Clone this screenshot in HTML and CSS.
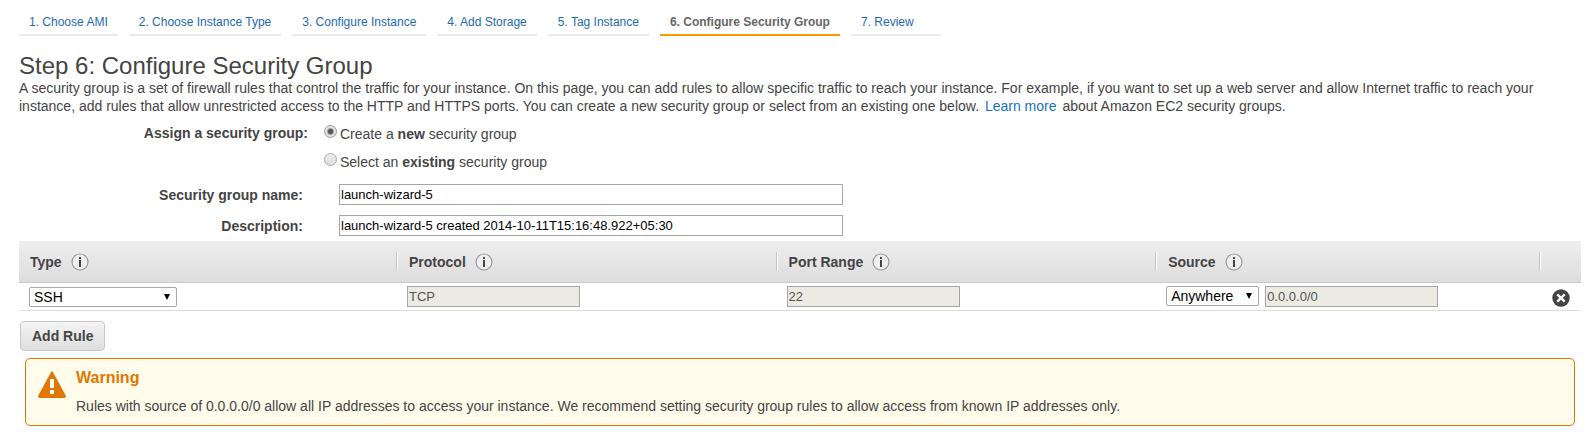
FILE: index.html
```html
<!DOCTYPE html>
<html lang="en">
<head>
<meta charset="utf-8">
<title>Step 6: Configure Security Group</title>
<link rel="stylesheet" href="styles.css">
</head>
<body>
<svg class="sprite" aria-hidden="true">
  <symbol id="info" viewBox="0 0 18 18">
    <circle cx="9" cy="9" r="8" fill="#eee" stroke="#999" stroke-width="1.2"/>
    <path d="M8 4h2v2H8zM8 7h2v7H8z" fill="#444"/>
  </symbol>
</svg>
<nav class="steps">
  <a class="step" href="#">1. Choose AMI</a>
  <a class="step" href="#">2. Choose Instance Type</a>
  <a class="step" href="#">3. Configure Instance</a>
  <a class="step" href="#">4. Add Storage</a>
  <a class="step" href="#">5. Tag Instance</a>
  <a class="step step-current" href="#" aria-current="step">6. Configure Security Group</a>
  <a class="step" href="#">7. Review</a>
</nav>
<main class="content">
  <h1 class="title">Step 6: Configure Security Group</h1>
  <p class="intro">A security group is a set of firewall rules that control the traffic for your instance. On this page, you can add rules to allow specific traffic to reach your instance. For example, if you want to set up a web server and allow Internet traffic to reach your instance, add rules that allow unrestricted access to the HTTP and HTTPS ports. You can create a new security group or select from an existing one below. <a class="learn" href="#">Learn more</a> about Amazon EC2 security groups.</p>

  <form class="form">
    <div class="assign" role="radiogroup" aria-labelledby="assign-label">
      <span class="label" id="assign-label">Assign a security group:</span>
      <div class="choices">
        <label class="choice"><input class="radio" type="radio" name="group" checked><span>Create a <b>new</b> security group</span></label>
        <label class="choice"><input class="radio" type="radio" name="group"><span>Select an <b>existing</b> security group</span></label>
      </div>
    </div>
    <div class="field">
      <label class="label" for="name">Security group name:</label>
      <input class="text" id="name" type="text" value="launch-wizard-5">
    </div>
    <div class="field">
      <label class="label" for="desc">Description:</label>
      <input class="text" id="desc" type="text" value="launch-wizard-5 created 2014-10-11T15:16:48.922+05:30">
    </div>
  </form>

  <table class="rules">
    <colgroup><col class="col-type"><col class="col-mid"><col class="col-mid"><col class="col-source"><col></colgroup>
    <thead>
      <tr>
        <th><div class="head">Type <svg class="info"><use href="#info"/></svg></div></th>
        <th><div class="head">Protocol <svg class="info"><use href="#info"/></svg></div></th>
        <th><div class="head">Port Range <svg class="info"><use href="#info"/></svg></div></th>
        <th><div class="head">Source <svg class="info"><use href="#info"/></svg></div></th>
        <th><div class="head"></div></th>
      </tr>
    </thead>
    <tbody>
      <tr>
        <td><div class="cell"><span class="pick pick-type"><select class="select" aria-label="Type"><option>SSH</option></select></span></div></td>
        <td><div class="cell"><input class="text locked" type="text" value="TCP" aria-label="Protocol" disabled></div></td>
        <td><div class="cell"><input class="text locked" type="text" value="22" aria-label="Port range" disabled></div></td>
        <td><div class="cell"><span class="pick pick-source"><select class="select" aria-label="Source"><option>Anywhere</option></select></span><input class="text locked" type="text" value="0.0.0.0/0" aria-label="Source address" disabled></div></td>
        <td><div class="cell cell-end"><button class="remove" type="button" aria-label="Remove rule"><svg class="remove-icon" viewBox="0 0 18 18"><circle cx="9" cy="9" r="8.7" fill="#444"/><path d="M5.3 5.3l7.4 7.4M12.7 5.3l-7.4 7.4" stroke="#fff" stroke-width="2.4"/></svg></button></div></td>
      </tr>
    </tbody>
  </table>
  <button class="add" type="button">Add Rule</button>

  <section class="warning">
    <svg class="warning-icon" viewBox="0 0 28 27"><path d="M13 1.2Q14 -.5 15 1.2L27.7 24.5Q28.3 27 26.5 27H1.5Q-.3 27 .3 24.5Z" fill="#e07700"/><path d="M12 8h4v9h-4zM12 19h4v4h-4z" fill="#fff"/></svg>
    <div class="warning-body">
      <h2 class="warning-title">Warning</h2>
      <p class="warning-text">Rules with source of 0.0.0.0/0 allow all IP addresses to access your instance. We recommend setting security group rules to allow access from known IP addresses only.</p>
    </div>
  </section>
</main>
</body>
</html>
```
FILE: styles.css
```css
* { box-sizing: border-box; }

body {
  margin: 0;
  background: #fff;
  color: #444;
  font: 14px/18px "Liberation Sans", Arial, sans-serif;
}

h1, h2, p { margin: 0; }

.sprite { display: none; }

.steps {
  display: flex;
  gap: 11px;
  padding: 12px 19px 0;
}

.step {
  min-width: 90px;
  padding: 0 10px 2px;
  border-bottom: 2px solid #eaeaea;
  color: #1e6ab4;
  font-size: 12px;
  line-height: 20px;
  text-decoration: none;
  white-space: nowrap;
}

.step-current {
  border-color: #f90;
  color: #666;
  font-weight: bold;
}

.content { padding: 17px 5px 0 19px; }

.title {
  font-size: 24px;
  font-weight: normal;
  line-height: 26px;
}

.intro { padding-right: 5px; }

.learn {
  margin: 0 2px;
  color: #1673ba;
  text-decoration: none;
}

.assign {
  display: flex;
  gap: 16px;
  padding: 9px 0 2px;
}

.label {
  flex: none;
  width: 284px;
  font-weight: bold;
  text-align: right;
}

.assign .label { width: 289px; }

.choices {
  display: grid;
  gap: 8px;
}

.choice {
  display: flex;
  gap: 3px;
  line-height: 20px;
}

.radio {
  appearance: none;
  width: 13px;
  height: 13px;
  margin: 1px 0 0;
  border: 1px solid #aaa;
  border-radius: 50%;
  background: linear-gradient(#eee, #ddd);
}

.radio:checked {
  border-color: #999;
  background: radial-gradient(circle, #555 0 2px, #e4e4e4 4px);
}

.field {
  display: flex;
  align-items: center;
  gap: 36px;
}

.text {
  width: 504px;
  height: 21px;
  padding: 0 1px;
  border: 1px solid #a6a6a6;
  background: #fff;
  color: #000;
  font: 13px "Liberation Sans", Arial, sans-serif;
}

.form {
  display: grid;
  gap: 10px;
  padding-bottom: 5px;
}

.rules {
  width: 100%;
  border-collapse: collapse;
  table-layout: fixed;
}

.col-type { width: 24.2%; }
.col-mid { width: 24.3%; }
.col-source { width: 24.6%; }

.rules thead {
  border-bottom: 1px solid #c8c8c8;
  background: linear-gradient(#eee, #ddd);
}

.rules tbody { border-bottom: 1px solid #ddd; }

th, td { padding: 0; }

.head {
  display: flex;
  align-items: center;
  gap: 9px;
  height: 19px;
  margin: 11px 0;
  padding-left: 11px;
  border-left: 1px solid #fff;
  box-shadow: -1px 0 #c4c4c4;
}

th:first-child .head {
  border-color: transparent;
  box-shadow: none;
  padding-left: 10px;
}

.info {
  width: 18px;
  height: 18px;
}

.cell {
  display: flex;
  gap: 6px;
  padding: 3px 0 3px 10px;
}

.pick {
  position: relative;
  height: 20px;
}

.pick::after {
  content: "";
  position: absolute;
  top: 7px;
  right: 7px;
  border: solid transparent;
  border-width: 6px 3px 0;
  border-top-color: #000;
  pointer-events: none;
}

.select {
  appearance: none;
  width: 100%;
  height: 20px;
  padding: 0 4px;
  border: 1px solid #a6a6a6;
  border-radius: 2px;
  background: #fff;
  color: #000;
  font: 14px "Liberation Sans", Arial, sans-serif;
}

.pick-type { width: 148px; }
.pick-source { width: 93px; }

.locked {
  width: 173px;
  background: #ebebe4;
  color: #545454;
}

.cell-end {
  justify-content: flex-end;
  padding: 4px 11px 2px 0;
}

.remove {
  padding: 0;
  border: 0;
  background: none;
}

.remove-icon {
  display: block;
  width: 18px;
  height: 18px;
}

.add {
  display: block;
  height: 30px;
  margin: 10px 0 7px 1px;
  padding: 0 11px;
  border: 1px solid #c8c8c8;
  border-radius: 4px;
  background: linear-gradient(#f4f4f4, #dedede);
  color: #444;
  font: bold 14px "Liberation Sans", Arial, sans-serif;
}

.warning {
  display: flex;
  gap: 10px;
  margin: 0 6px;
  padding: 10px 12px;
  border: 1px solid #e07700;
  border-radius: 5px;
  background: #fffceb;
}

.warning-icon {
  flex: none;
  width: 28px;
  height: 27px;
  margin-top: 2px;
}

.warning-body {
  display: grid;
  gap: 10px;
}

.warning-title {
  color: #e07700;
  font-size: 16px;
  line-height: 18px;
}
```
